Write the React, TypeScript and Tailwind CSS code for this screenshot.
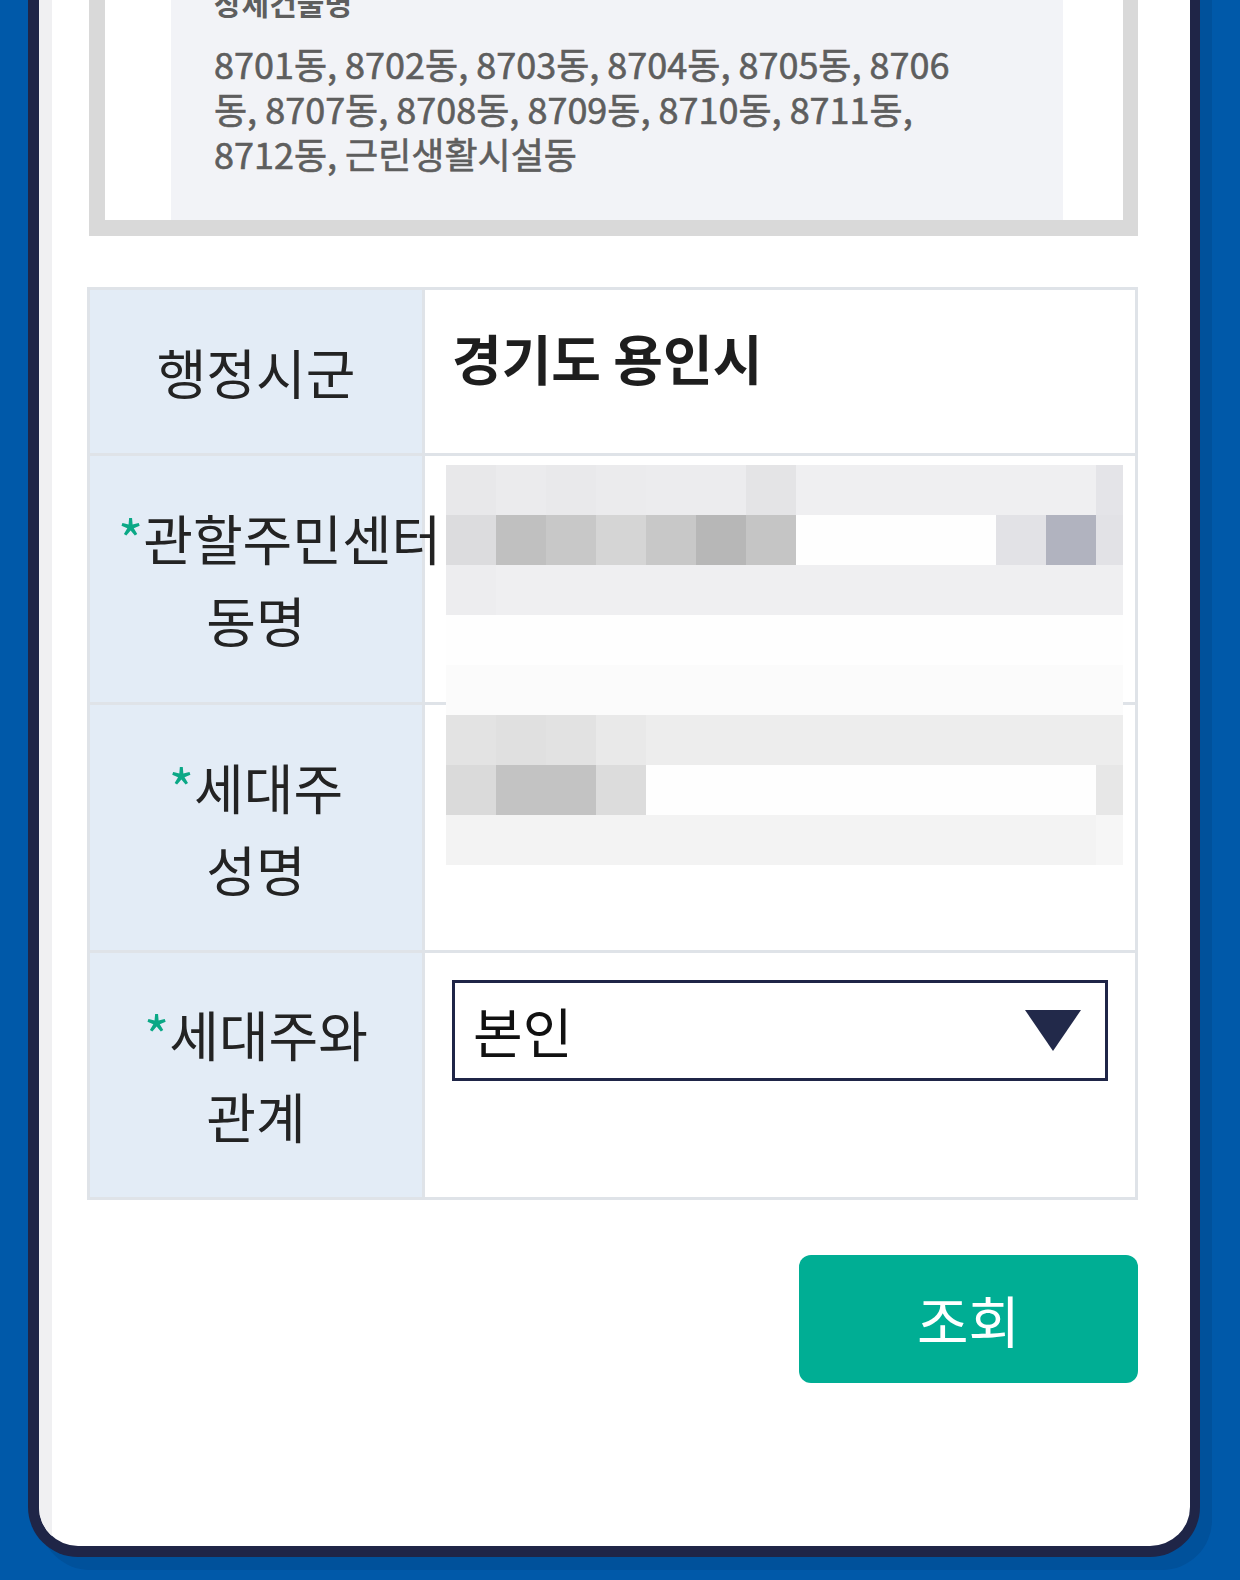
import React from "react";

const mosaic: string[][] = [
  ["bg-[#e8e8ea]", "bg-[#ebebed]", "bg-[#e9e9eb]", "bg-[#ebebed]", "bg-[#ececee]", "bg-[#ececee]", "bg-[#e4e4e6]", "bg-[#efeff1]", "bg-[#efeff1]", "bg-[#efeff1]", "bg-[#efeff1]", "bg-[#efeff1]", "bg-[#efeff1]", "bg-[#e4e4e8]"],
  ["bg-[#dcdcde]", "bg-[#c0c0c0]", "bg-[#c8c8c8]", "bg-[#d5d5d5]", "bg-[#c8c8c8]", "bg-[#b7b7b7]", "bg-[#c5c5c5]", "bg-[#fefefe]", "bg-[#fefefe]", "bg-[#fefefe]", "bg-[#fefefe]", "bg-[#e2e2e6]", "bg-[#b1b3bf]", "bg-[#e2e2e6]"],
  ["bg-[#ededef]", "bg-[#efeff1]", "bg-[#efeff1]", "bg-[#efeff1]", "bg-[#efeff1]", "bg-[#efeff1]", "bg-[#efeff1]", "bg-[#efeff1]", "bg-[#efeff1]", "bg-[#efeff1]", "bg-[#efeff1]", "bg-[#efeff1]", "bg-[#efeff1]", "bg-[#efeff1]"],
  ["bg-[#fefefe]", "bg-[#fefefe]", "bg-[#fefefe]", "bg-[#fefefe]", "bg-[#fefefe]", "bg-[#fefefe]", "bg-[#fefefe]", "bg-[#fefefe]", "bg-[#fefefe]", "bg-[#fefefe]", "bg-[#fefefe]", "bg-[#fefefe]", "bg-[#fefefe]", "bg-[#fefefe]"],
  ["bg-[#fbfbfb]", "bg-[#fbfbfb]", "bg-[#fbfbfb]", "bg-[#fbfbfb]", "bg-[#fbfbfb]", "bg-[#fbfbfb]", "bg-[#fbfbfb]", "bg-[#fbfbfb]", "bg-[#fbfbfb]", "bg-[#fbfbfb]", "bg-[#fbfbfb]", "bg-[#fbfbfb]", "bg-[#fbfbfb]", "bg-[#fbfbfb]"],
  ["bg-[#e3e3e3]", "bg-[#e0e0e0]", "bg-[#e2e2e2]", "bg-[#e9e9e9]", "bg-[#ededed]", "bg-[#ededed]", "bg-[#ededed]", "bg-[#ededed]", "bg-[#ededed]", "bg-[#ededed]", "bg-[#ededed]", "bg-[#ededed]", "bg-[#ededed]", "bg-[#ededed]"],
  ["bg-[#dadada]", "bg-[#c3c3c3]", "bg-[#c3c3c3]", "bg-[#dcdcdc]", "bg-[#fefefe]", "bg-[#fefefe]", "bg-[#fefefe]", "bg-[#fefefe]", "bg-[#fefefe]", "bg-[#fefefe]", "bg-[#fefefe]", "bg-[#fefefe]", "bg-[#fefefe]", "bg-[#e7e7e7]"],
  ["bg-[#f3f3f3]", "bg-[#f3f3f3]", "bg-[#f3f3f3]", "bg-[#f3f3f3]", "bg-[#f3f3f3]", "bg-[#f3f3f3]", "bg-[#f3f3f3]", "bg-[#f3f3f3]", "bg-[#f3f3f3]", "bg-[#f3f3f3]", "bg-[#f3f3f3]", "bg-[#f3f3f3]", "bg-[#f3f3f3]", "bg-[#f6f6f6]"],
];

function Req() {
  return <span className="text-[#0aa886]">*</span>;
}

function Label({ children }: { children: React.ReactNode }) {
  return (
    <div className="flex w-[335px] shrink-0 items-center border-r-[3px] border-[#dfe3e8] bg-[#e3ecf6] px-[28px]">
      <div className="w-full whitespace-nowrap text-center text-[54px] leading-[82px] text-[#232323]">
        {children}
      </div>
    </div>
  );
}

export default function App() {
  return (
    <div className="h-[1580px] w-[1240px] overflow-hidden bg-[#0059a9] font-['Noto_Sans_CJK_KR','Noto_Sans',sans-serif]">
      {/* device frame, top scrolled off screen */}
      <div className="-mt-[100px] ml-[28px] flex h-[1657px] w-[1172px] overflow-hidden rounded-b-[50px] border-b-[11px] border-l-[11px] border-r-[10px] border-[#1f2547] bg-white shadow-[12px_13px_0_0_#00519b]">
        <div className="w-[13px] shrink-0 bg-[#f0f0f2]" />
        <div className="flex-1 pl-[35px] pr-[52px] pt-[20px]">
          {/* building list image */}
          <div className="ml-[2px] border-[16px] border-r-[15px] border-[#d9d9d9] bg-white pl-[66px] pr-[60px]">
            <div className="bg-[#f2f3f7] pb-[44px] pl-[43px] pt-[44px] text-[#5e5e5e]">
              <div className="text-[30px] font-bold leading-[45px]">상세건물명</div>
              <div className="mt-[16px] text-[36px] leading-[45px] [-webkit-text-stroke:0.6px_#5e5e5e]">
                8701동, 8702동, 8703동, 8704동, 8705동, 8706
                <br />
                동, 8707동, 8708동, 8709동, 8710동, 8711동,
                <br />
                8712동, 근린생활시설동
              </div>
            </div>
          </div>

          {/* form table */}
          <div className="relative mt-[51px] border-x-[3px] border-t-[3px] border-[#dfe3e8]">
            <div className="flex h-[166px] border-b-[3px] border-[#dfe3e8]">
              <Label>행정시군</Label>
              <div className="flex-1 p-[27px] text-[54px] font-bold leading-[82px] text-[#1e1e1e]">경기도 용인시</div>
            </div>
            <div className="flex h-[249px] border-b-[3px] border-[#dfe3e8]">
              <Label>
                <Req />관할주민센터
                <br />
                동명
              </Label>
              <div className="flex-1" />
            </div>
            <div className="flex h-[248px] border-b-[3px] border-[#dfe3e8]">
              <Label>
                <Req />세대주
                <br />
                성명
              </Label>
              <div className="flex-1" />
            </div>
            <div className="flex h-[247px] border-b-[3px] border-[#dfe3e8]">
              <Label>
                <Req />세대주와
                <br />
                관계
              </Label>
              <div className="flex-1 p-[27px]">
                <div className="flex h-[101px] items-center justify-between border-[3px] border-[#1f2547] pl-[18px] pr-[24px]">
                  <span className="text-[54px] leading-none text-[#111]">본인</span>
                  <svg width="56" height="41" viewBox="0 0 56 41">
                    <polygon points="0,0 56,0 28,41" fill="#22294a" />
                  </svg>
                </div>
              </div>
            </div>

            {/* privacy mosaic over the two input fields */}
            <div className="absolute left-[356px] top-[175px] grid grid-cols-[repeat(13,50px)_27px]">
              {mosaic.map((row, r) =>
                row.map((c, i) => <div key={`${r}-${i}`} className={`h-[50px] ${c}`} />)
              )}
            </div>
          </div>

          <div className="mt-[55px] flex justify-end">
            <button className="flex h-[128px] w-[339px] items-center justify-center rounded-[12px] bg-[#00ae94] text-[56px] text-white">
              조회
            </button>
          </div>
        </div>
      </div>
    </div>
  );
}
